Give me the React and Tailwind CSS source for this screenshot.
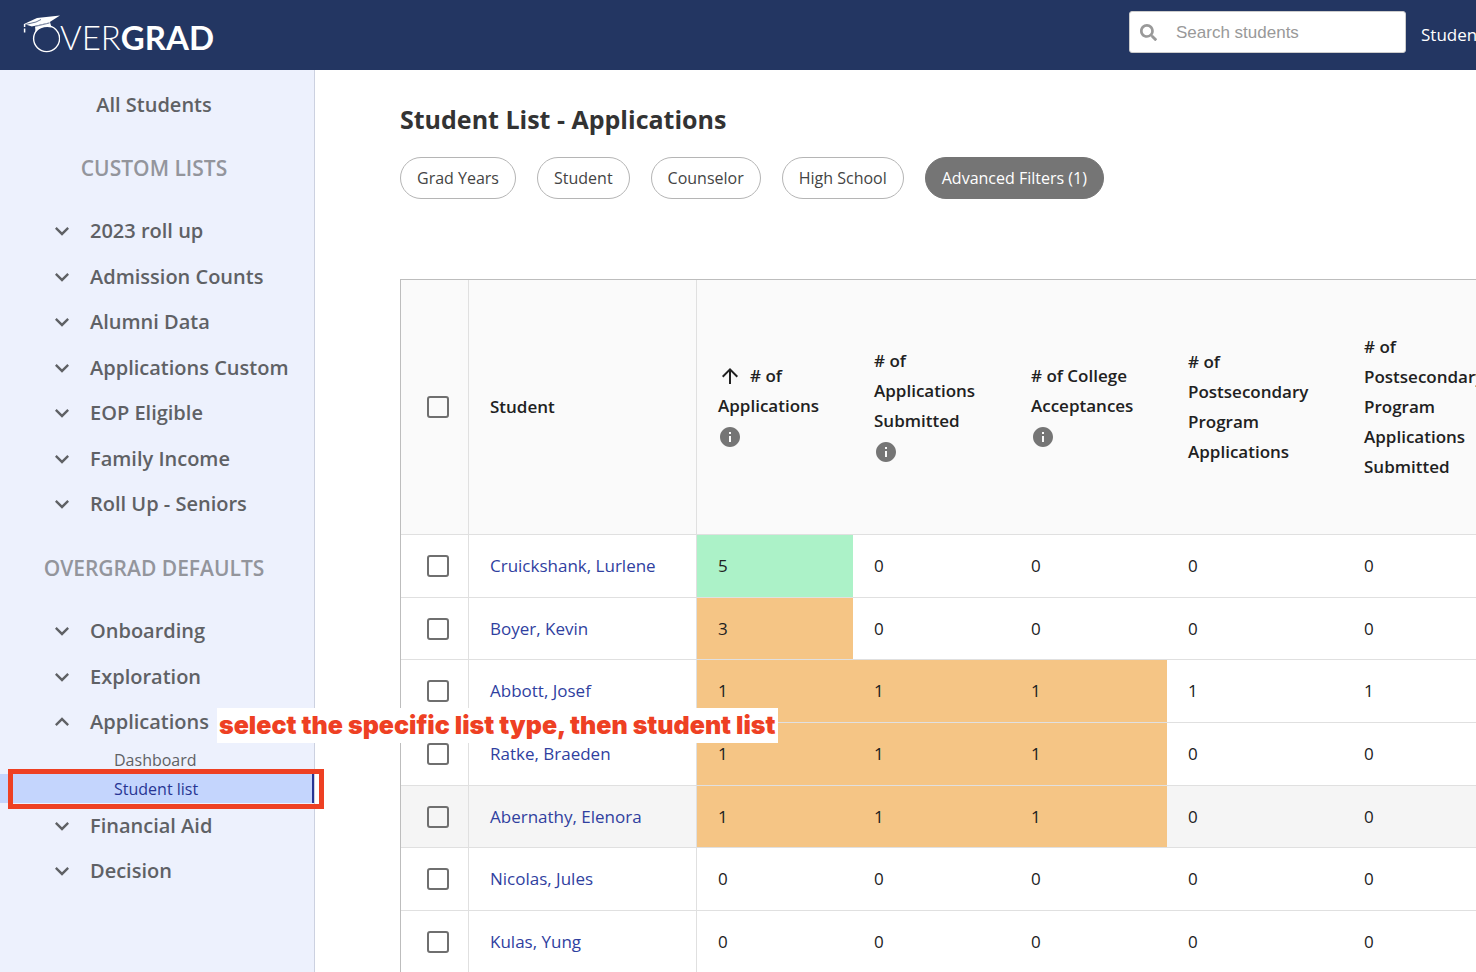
import { FaSearch } from "react-icons/fa"
import { MdArrowUpward, MdExpandLess, MdExpandMore, MdInfo } from "react-icons/md"

const customLists = [
    "2023 roll up",
    "Admission Counts",
    "Alumni Data",
    "Applications Custom",
    "EOP Eligible",
    "Family Income",
    "Roll Up - Seniors",
]

const defaultLists = ["Onboarding", "Exploration", "Applications", "Financial Aid", "Decision"]

const filters = ["Grad Years", "Student", "Counselor", "High School"]

const columns = [
    { lines: ["# of", "Applications"], info: true, sorted: true },
    { lines: ["# of", "Applications", "Submitted"], info: true },
    { lines: ["# of College", "Acceptances"], info: true },
    { lines: ["# of", "Postsecondary", "Program", "Applications"] },
    { lines: ["# of", "Postsecondary", "Program", "Applications", "Submitted"] },
]

const students = [
    { name: "Cruickshank, Lurlene", values: [5, 0, 0, 0, 0], marks: ["green"] },
    { name: "Boyer, Kevin", values: [3, 0, 0, 0, 0], marks: ["orange"] },
    { name: "Abbott, Josef", values: [1, 1, 1, 1, 1], marks: ["orange", "orange", "orange"] },
    { name: "Ratke, Braeden", values: [1, 1, 1, 0, 0], marks: ["orange", "orange", "orange"] },
    { name: "Abernathy, Elenora", values: [1, 1, 1, 0, 0], marks: ["orange", "orange", "orange"], active: true },
    { name: "Nicolas, Jules", values: [0, 0, 0, 0, 0], marks: [] },
    { name: "Kulas, Yung", values: [0, 0, 0, 0, 0], marks: [] },
]

const markColors = {
    green: "bg-[#acf2c8]",
    orange: "bg-[#f5c585]",
}

function Logo() {
    return (
        <a href="#" aria-label="Overgrad" className="flex items-center pl-[23px] text-white">
            <svg width="37" height="40" viewBox="0 0 37 40" fill="none">
                <circle cx="23.6" cy="23.6" r="13" stroke="currentColor" strokeWidth="1.4" />
                <path d="M12 11 27 7 28.5 12.5C23 11 17 12.5 12.5 17Z" fill="currentColor" />
                <path d="M1 9 14 3 37 0.5 26 7.5 9 11.5Z" fill="currentColor" />
                <path d="M18 4.5 13 7 2.5 9.5" stroke="#233662" strokeWidth="0.7" />
                <path d="M9 12.2 26.5 8" stroke="#233662" strokeWidth="0.6" />
                <path d="M1.6 9V12M1.6 13.5V17.5" stroke="currentColor" strokeWidth="1.5" />
            </svg>
            <span className="pt-[4px] font-['Lato'] text-[33px] leading-[40px]">
                <span className="font-light">VER</span>
                <span className="font-bold">GRAD</span>
            </span>
        </a>
    )
}

function TopBar() {
    return (
        <header className="flex h-[70px] shrink-0 justify-between bg-[#233662]">
            <Logo />
            <div className="flex w-[347px] shrink-0 gap-[15px] overflow-hidden pt-[11px]">
                <label className="flex h-[42px] w-[277px] shrink-0 items-center gap-[19px] rounded-[3px] border border-[#ccc] bg-white pl-[10px] text-[#999]">
                    <FaSearch size={17} />
                    <input
                        type="search"
                        aria-label="Search students"
                        placeholder="Search students"
                        className="min-w-0 flex-1 pt-[2px] font-['Liberation_Sans',sans-serif] text-[17px] outline-none placeholder:text-[#999]"
                    />
                </label>
                <a href="#" className="shrink-0 pt-[12px] text-[17px] leading-[24px] font-medium text-white">Students</a>
            </div>
        </header>
    )
}

// eslint-disable-next-line react/prop-types
function ListButton({ label, index, open }) {
    return (
        <button
            type="button"
            aria-expanded={open}
            className={`flex w-full items-center gap-[14px] pl-12 text-left text-[20px] font-semibold ${index % 2 ? "h-[45px]" : "h-[46px]"}`}
        >
            {open ? <MdExpandLess size={28} /> : <MdExpandMore size={28} />}
            {label}
        </button>
    )
}

function Sidebar() {
    return (
        <aside className="w-[315px] shrink-0 border-r border-[#ccd1e0] bg-[#edf1fd] pt-3 text-[#5f6165]">
            <a href="#" className="flex h-[45px] items-center justify-center pr-[6px] text-[20px] font-semibold">All Students</a>
            <h2 className="flex h-[81px] items-center justify-center pt-[2px] pr-[6px] text-[21px] font-semibold text-[#93959c]">CUSTOM LISTS</h2>
            <ul>
                {customLists.map((label, i) => (
                    <li key={label}>
                        <ListButton label={label} index={i} open={false} />
                    </li>
                ))}
            </ul>
            <h2 className="flex h-[81px] items-center justify-center pt-[2px] pr-[6px] text-[21px] font-semibold text-[#93959c]">OVERGRAD DEFAULTS</h2>
            <ul>
                {defaultLists.map((label, i) => (
                    <li key={label} className="relative">
                        <ListButton label={label} index={i} open={label === "Applications"} />
                        {label === "Applications" && (
                            <>
                                <a href="#" className="flex h-[29px] items-center pl-[114px] text-[16px]">Dashboard</a>
                                <a href="#" className="relative flex h-[29px] items-center border-r-2 border-[#283593] bg-[#c4d5fd] pl-[114px] text-[16px] text-[#283593]">
                                    Student list
                                    <span className="absolute -top-[5px] -right-[12px] -bottom-[6px] left-[8px] z-10 border-[5px] border-[#ee4023]" />
                                </a>
                                <p className="absolute top-[9px] left-[217px] z-10 bg-white px-[2px] font-['Inter'] text-[25px] leading-[35px] font-black whitespace-nowrap text-[#ee4023]">
                                    select the specific list type, then student list
                                </p>
                            </>
                        )}
                    </li>
                ))}
            </ul>
        </aside>
    )
}

// eslint-disable-next-line react/prop-types
function CheckBox({ label }) {
    return (
        <input
            type="checkbox"
            aria-label={label}
            className="ml-[26px] block size-[22px] appearance-none rounded-[3px] border-2 border-[#6f6f6f] checked:bg-[#283593]"
        />
    )
}

function StudentTable() {
    return (
        <table className="w-[1120px] table-fixed border-separate border-spacing-0 border-t border-l border-[#bdbdbd] text-[17px] text-[#212121]">
            <colgroup>
                <col className="w-[68px]" />
                <col className="w-[228px]" />
                <col className="w-[156px]" />
                <col className="w-[157px]" />
                <col className="w-[157px]" />
                <col className="w-[176px]" />
                <col />
            </colgroup>
            <thead>
                <tr className="h-[255px] bg-[#fafafa] text-left leading-[30px]">
                    <th className="border-r border-b border-[#e0e0e0] p-0"><CheckBox label="Select all students" /></th>
                    <th className="border-r border-b border-[#e0e0e0] px-[21px] font-semibold">Student</th>
                    {columns.map((col, i) => (
                        <th key={i} className="border-b border-[#e0e0e0] p-0 pl-[21px] font-semibold">
                            {col.lines.map((line, n) => (
                                <div key={n} className="flex items-center gap-2">
                                    {col.sorted && n === 0 && <MdArrowUpward size={24} />}
                                    {line}
                                </div>
                            ))}
                            {col.info && (
                                <button type="button" aria-label="More information" className="flex h-[32px] items-center text-[#757575]">
                                    <MdInfo size={24} />
                                </button>
                            )}
                        </th>
                    ))}
                </tr>
            </thead>
            <tbody>
                {students.map((student) => (
                    <tr key={student.name} className={`h-[63px] nth-[3n+2]:h-[62px] ${student.active ? "bg-[#f5f5f5]" : "bg-white"}`}>
                        <td className="border-r border-b border-[#e0e0e0] p-0"><CheckBox label={student.name} /></td>
                        <td className="border-r border-b border-[#e0e0e0] px-[21px] py-0">
                            <a href="#" className="text-[#303f9f]">{student.name}</a>
                        </td>
                        {student.values.map((value, i) => (
                            <td key={i} className={`border-b border-[#e0e0e0] px-[21px] py-0 ${markColors[student.marks[i]] ?? ""}`}>
                                {value}
                            </td>
                        ))}
                    </tr>
                ))}
            </tbody>
        </table>
    )
}

export default function App() {
    return (
        <div className="flex h-screen flex-col overflow-hidden bg-white font-['Open_Sans',sans-serif]">
            <TopBar />
            <div className="flex min-h-0 flex-1">
                <Sidebar />
                <main className="min-w-0 flex-1 overflow-hidden pt-[34px] pl-[85px]">
                    <h1 className="text-[25px] leading-[30px] font-bold text-[#333]">Student List - Applications</h1>
                    <div className="mt-[23px] mb-[80px] flex gap-[21px]">
                        {filters.map((label) => (
                            <button key={label} type="button" className="h-[42px] rounded-full border border-[#b5b5b5] px-4 text-[16px] text-[#444]">
                                {label}
                            </button>
                        ))}
                        <button type="button" className="h-[42px] rounded-full border border-[#757575] bg-[#757575] px-4 text-[16px] font-medium text-white">
                            Advanced Filters (1)
                        </button>
                    </div>
                    <StudentTable />
                </main>
            </div>
        </div>
    )
}
